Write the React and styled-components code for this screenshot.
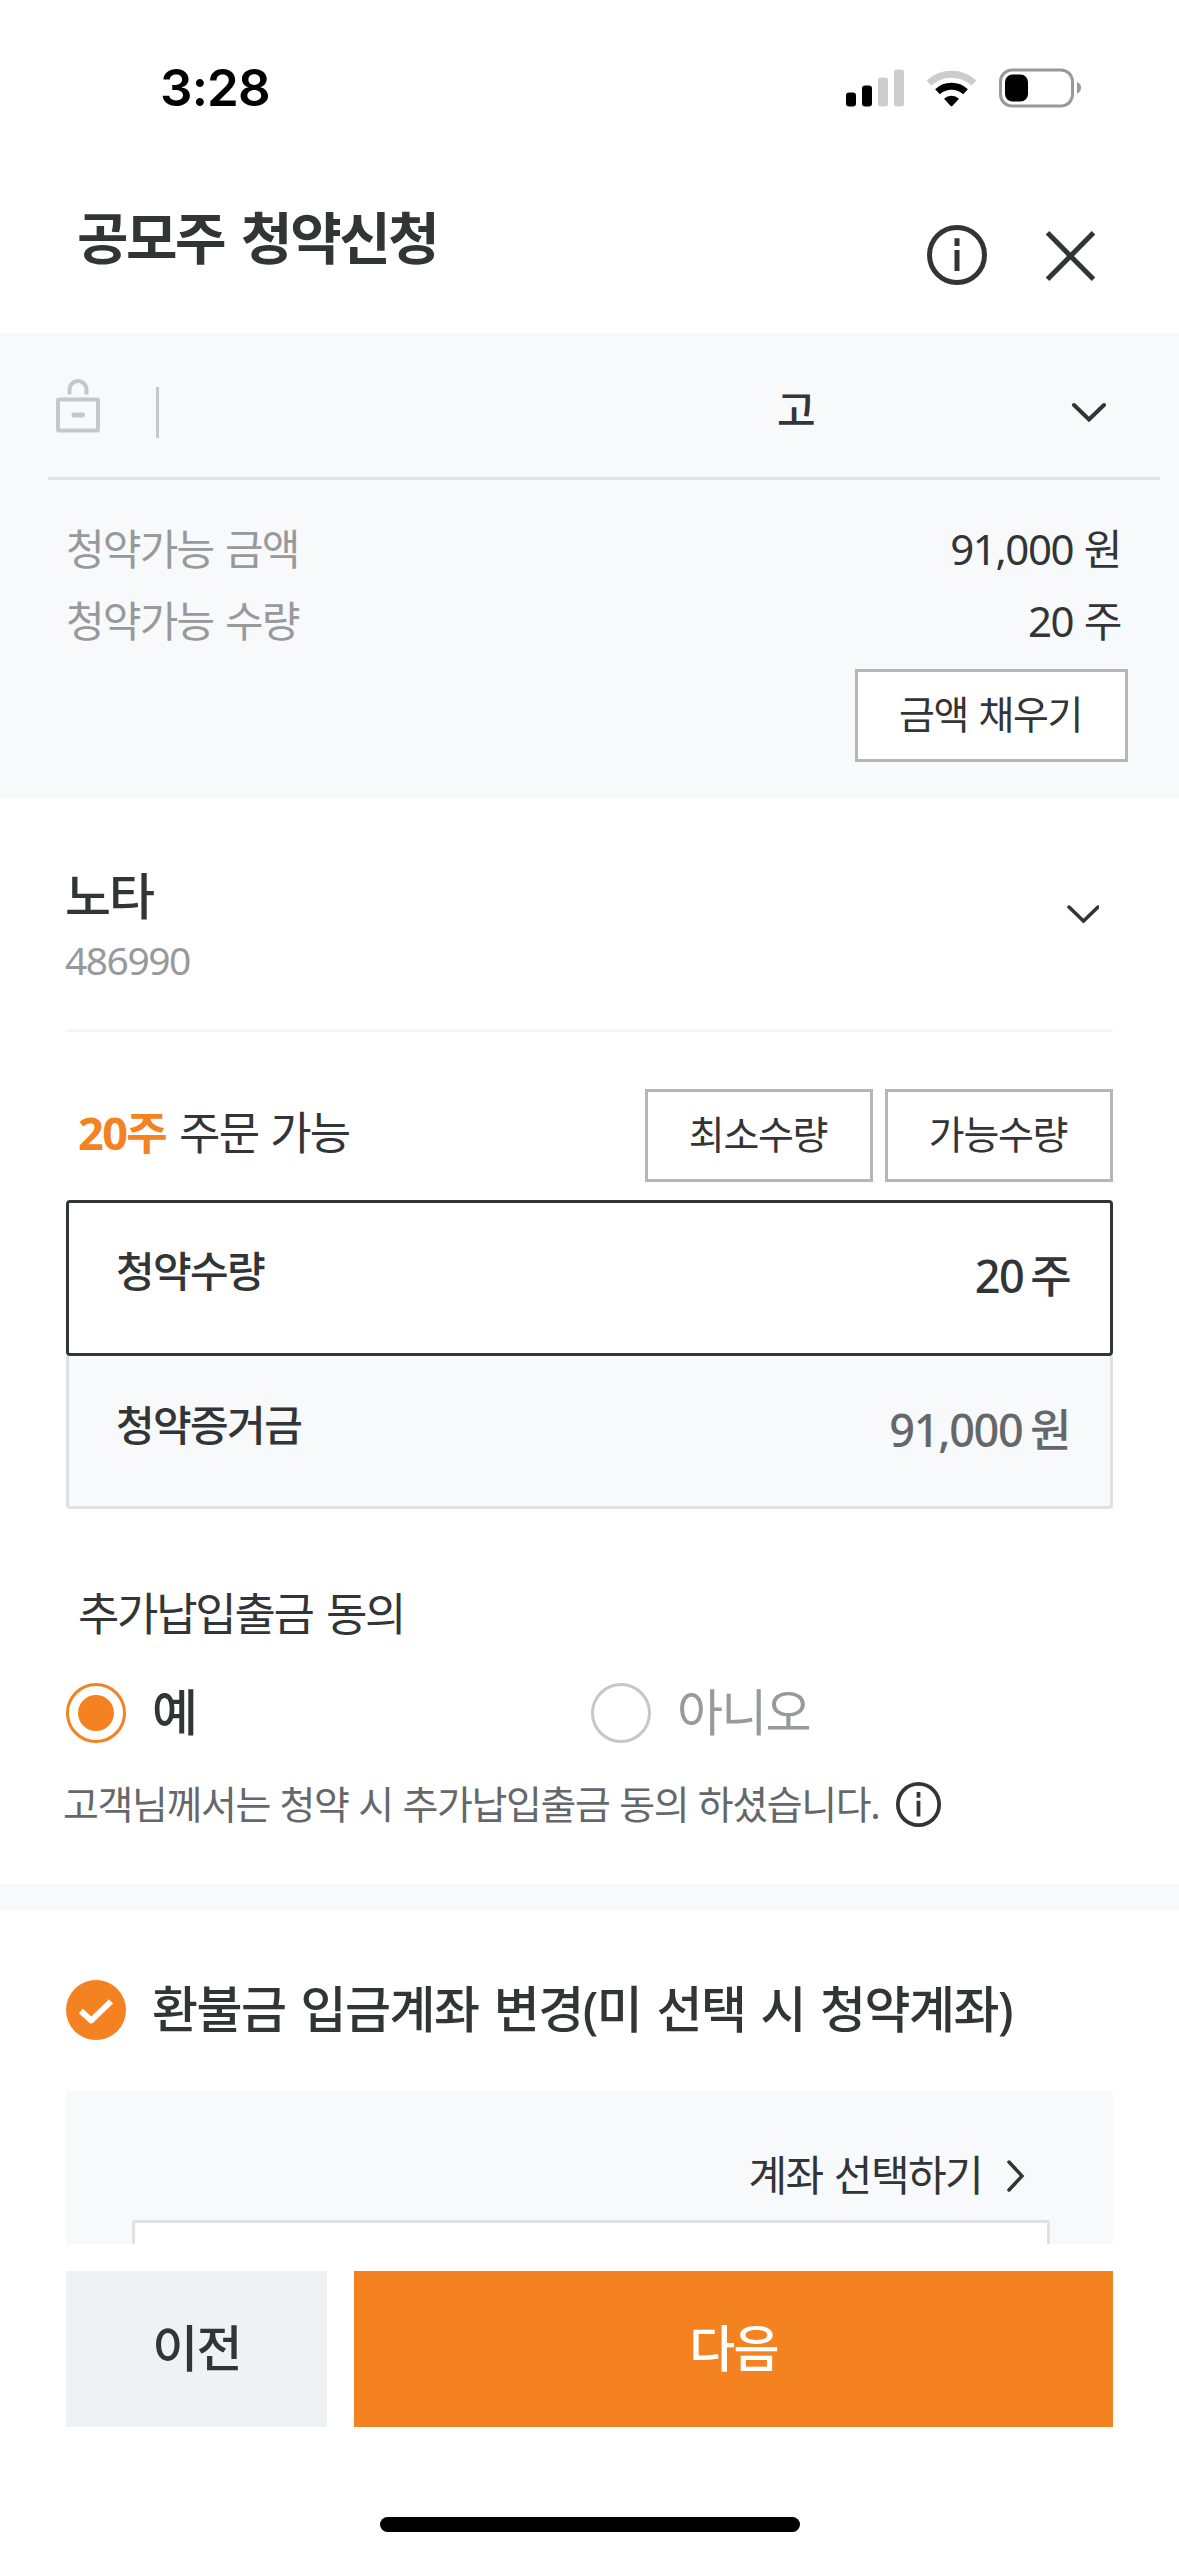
import React from "react";
import styled, { createGlobalStyle } from "styled-components";

const color = {
  ink: "#333435",
  sub: "#666769",
  mute: "#98999b",
  faint: "#c5c7ca",
  line: "#dfe1e4",
  panel: "#f8f9fb",
  orange: "#f58220",
};

const GlobalStyle = createGlobalStyle`
  * { box-sizing: border-box; }
  body { margin: 0; background: #fff; }
  button { font: inherit; margin: 0; padding: 0; background: none; border: 0; border-radius: 0; color: inherit; letter-spacing: inherit; }
`;

const Screen = styled.div`
  width: 1179px;
  height: 2556px;
  overflow: hidden;
  display: flex;
  flex-direction: column;
  background: #fff;
  color: ${color.ink};
  font-family: "Noto Sans", "Noto Sans CJK KR", sans-serif;
  font-size: 42px;
  line-height: 60px;
`;

const Text = styled.span`
  display: block;
  white-space: nowrap;
  padding-bottom: 2px;
  font-size: ${(p) => p.$size || 42}px;
  font-weight: ${(p) => p.$weight || 400};
  color: ${(p) => p.$color || color.ink};
  letter-spacing: ${(p) => p.$track ?? -1.6}px;
  word-spacing: ${(p) => p.$word || 0}px;
`;

const StatusBar = styled.div`
  height: 176px;
  padding: 0 98px 0 160px;
  display: flex;
  align-items: center;
  justify-content: space-between;
`;

const Clock = styled.span`
  font-family: Inter, sans-serif;
  font-weight: 600;
  font-size: 51px;
  letter-spacing: -0.8px;
  color: #000;
`;

const Header = styled.header`
  height: 157px;
  padding: 31px 82px 0 77px;
  display: flex;
  align-items: flex-start;
  justify-content: space-between;
`;

const Title = styled(Text)`
  margin: 0;
`;

const HeaderActions = styled.div`
  display: flex;
  align-items: center;
  gap: 57px;
  padding-top: 18px;
`;

const AccountPanel = styled.section`
  height: 465px;
  background: ${color.panel};
  display: flex;
  flex-direction: column;
`;

const AccountSelect = styled.div`
  height: 147px;
  margin: 0 19px 0 48px;
  padding: 15px 53px 0 7px;
  border-bottom: 3px solid ${color.line};
  display: flex;
  align-items: center;
`;

const Separator = styled.span`
  width: 3px;
  height: 51px;
  margin-left: 55px;
  background: ${color.faint};
`;

const AccountName = styled.div`
  flex: 1;
  padding-left: 618px;
  margin-top: -3px;
`;

const AccountToggle = styled.div`
  display: flex;
  padding-bottom: 2px;
`;

const AmountList = styled.div`
  padding: 34px 58px 0 66px;
`;

const AmountRow = styled.div`
  height: 72px;
  display: flex;
  align-items: center;
  justify-content: space-between;
`;

const OutlineButton = styled.button`
  width: ${(p) => p.$width}px;
  height: 93px;
  padding: 0 2px 1px 0;
  border: 3px solid #b3b7ba;
  background: #fff;
  display: flex;
  align-items: center;
  justify-content: center;
`;

const FillRow = styled.div`
  display: flex;
  justify-content: flex-end;
  padding: 11px 51px 0 0;
`;

const Stock = styled.section`
  height: 234px;
  margin: 0 66px;
  padding: 68px 14px 0 0;
  border-bottom: 3px solid #f5f7fa;
  display: flex;
  align-items: flex-start;
  justify-content: space-between;
`;

const StockInfo = styled.div`
  display: flex;
  flex-direction: column;
  gap: 2px;
  margin-left: -1px;
`;

const StockToggle = styled.div`
  padding-top: 38px;
  display: flex;
`;

const OrderBar = styled.div`
  margin: 57px 66px 18px;
  height: 93px;
  display: flex;
  align-items: center;
  gap: 12px;
`;

const Available = styled.div`
  flex: 1;
  display: flex;
  gap: 13px;
  padding: 0 0 4px 12px;
`;

const Field = styled.div`
  height: ${(p) => (p.$active ? 156 : 153)}px;
  margin: 0 66px;
  padding: ${(p) => (p.$active ? 38 : 39)}px 40px 0 47px;
  border: 3px solid ${(p) => (p.$active ? color.ink : color.line)};
  border-radius: ${(p) => (p.$active ? "4px" : "0 0 4px 4px")};
  ${(p) => !p.$active && "border-top: 0;"}
  background: ${(p) => (p.$active ? "#fff" : color.panel)};
  display: flex;
  justify-content: space-between;
`;

const FieldValue = styled.div`
  padding-top: 5px;
`;

const Consent = styled.section`
  height: 375px;
  padding: 75px 66px 0;
`;

const ConsentTitle = styled.div`
  height: 60px;
  padding-left: 12px;
`;

const RadioGroup = styled.div`
  display: grid;
  grid-template-columns: 525px 1fr;
  margin-top: 39px;
`;

const RadioOption = styled.label`
  height: 60px;
  display: flex;
  align-items: center;
  gap: 26px;
`;

const RadioDot = styled.span`
  width: 60px;
  height: 60px;
  border-radius: 50%;
  border: 3px solid ${(p) => (p.$checked ? color.orange : color.faint)};
  display: flex;
  align-items: center;
  justify-content: center;
  &::after {
    content: "";
    width: 36px;
    height: 36px;
    border-radius: 50%;
    background: ${(p) => (p.$checked ? color.orange : "transparent")};
  }
`;

const Note = styled.div`
  height: 45px;
  margin: 39px 0 0 -3px;
  display: flex;
  align-items: center;
  gap: 17px;
`;

const Band = styled.div`
  height: 27px;
  flex-shrink: 0;
  background: ${color.panel};
`;

const Refund = styled.section`
  height: 333px;
  padding: 69px 66px 0;
`;

const CheckRow = styled.label`
  height: 60px;
  display: flex;
  align-items: center;
  gap: 26px;
`;

const RefundPanel = styled.div`
  height: 153px;
  margin-top: 51px;
  padding: 55px 63px 0 66px;
  overflow: hidden;
  background: ${color.panel};
`;

const PickAccount = styled.div`
  height: 60px;
  display: flex;
  align-items: center;
  justify-content: flex-end;
  gap: 24px;
  padding-right: 25px;
`;

const AccountBox = styled.div`
  height: 100px;
  margin-top: 14px;
  border: 3px solid ${color.line};
  border-radius: 3px;
  background: #fff;
`;

const Footer = styled.footer`
  display: flex;
  gap: 27px;
  padding: 27px 66px 0;
`;

const FooterButton = styled.button`
  height: 156px;
  ${(p) => (p.$primary ? "flex: 1;" : "width: 261px;")}
  background: ${(p) => (p.$primary ? color.orange : "#eff1f5")};
  display: flex;
  align-items: center;
  justify-content: center;
`;

const HomeBar = styled.div`
  width: 420px;
  height: 15px;
  margin: 90px auto 0;
  border-radius: 8px;
  background: #000;
`;

const StatusIcons = () => (
  <svg width="236" height="40" viewBox="845 67.5 236 40" style={{ display: "block" }}>
    <rect x="846" y="92" width="10" height="14" rx="3" fill="#000" />
    <rect x="862" y="85" width="10" height="21" rx="3" fill="#000" />
    <rect x="878" y="77" width="10" height="29" rx="3" fill="#ccc" />
    <rect x="894" y="69" width="10" height="37" rx="3" fill="#ccc" />
    <path d="M929 82.5 A33 33 0 0 1 974 82.5" fill="none" stroke="#ccc" strokeWidth="7" />
    <path d="M937.5 91.3 A20.5 20.5 0 0 1 965.5 91.3" fill="none" stroke="#000" strokeWidth="7" />
    <path d="M944 98.3 A11 11 0 0 1 959 98.3 L952.3 105.4 Q951.5 106.2 950.7 105.4 Z" fill="#000" />
    <rect x="1000.5" y="69.5" width="72" height="36" rx="11.5" fill="none" stroke="#999" strokeWidth="3" />
    <rect x="1005" y="74" width="23" height="27" rx="7.5" fill="#000" />
    <path d="M1077 81.5 Q1081 83 1081 87.2 Q1081 91.5 1077 93 Z" fill="#999" />
  </svg>
);

const InfoIcon = ({ size, stroke }) => (
  <svg width={size} height={size} viewBox="0 0 60 60" fill="none" stroke={color.ink} strokeWidth={stroke}>
    <circle cx="30" cy="30" r={30 - stroke / 2} />
    <path d="M30 13.3V21M30 25V46" />
  </svg>
);

const CloseIcon = () => (
  <svg width="53" height="53" viewBox="0 0 53 53" fill="none" stroke={color.ink} strokeWidth="5">
    <path d="M3.5 3.8 49.5 50.3M49.5 3.8 3.5 50.3" />
  </svg>
);

const Chevron = ({ width, height, stroke, d }) => (
  <svg width={width} height={height} viewBox={`0 0 ${width} ${height}`} fill="none" stroke={color.ink} strokeWidth={stroke} strokeLinecap="round">
    <path d={d} />
  </svg>
);

const LockIcon = () => (
  <svg width="46" height="68" viewBox="0 0 46 68" fill="none" stroke={color.faint} strokeWidth="4">
    <path d="M14.5 16.5V11.500a8.500 8.500 0 0 1 17 0V16.5" transform="translate(0 -1)" />
    <rect x="3" y="20.5" width="40" height="31" rx="1" />
    <path d="M19 36H27.5" strokeWidth="5" strokeLinecap="round" />
  </svg>
);

const CheckIcon = () => (
  <svg width="60" height="60" viewBox="0 0 60 60">
    <circle cx="30" cy="30" r="30" fill={color.orange} />
    <path d="M14.8 31 25.3 40.500 45 21.300" fill="none" stroke="#fff" strokeWidth="5.8" strokeLinejoin="round" />
  </svg>
);

export default function App() {
  return (
    <>
      <GlobalStyle />
      <Screen>
        <StatusBar>
          <Clock>3:28</Clock>
          <StatusIcons />
        </StatusBar>
        <Header>
          <Title as="h1" $size={56} $weight={700} $track={-2.5} $word={5}>공모주 청약신청</Title>
          <HeaderActions>
            <InfoIcon size={60} stroke={5} />
            <CloseIcon />
          </HeaderActions>
        </Header>

        <AccountPanel>
          <AccountSelect>
            <LockIcon />
            <Separator />
            <AccountName>
              <Text $weight={500}>고</Text>
            </AccountName>
            <AccountToggle>
              <Chevron width={36} height={20} stroke={4} d="M3 3 18 17.5 33 3" />
            </AccountToggle>
          </AccountSelect>
          <AmountList>
            <AmountRow>
              <Text $color={color.mute} $track={-1.8} $word={2.5}>청약가능 금액</Text>
              <Text $track={-1.4} $word={1}>91,000 원</Text>
            </AmountRow>
            <AmountRow>
              <Text $color={color.mute} $track={-1.8} $word={2.5}>청약가능 수량</Text>
              <Text $track={-1.4} $word={1}>20 주</Text>
            </AmountRow>
          </AmountList>
          <FillRow>
            <OutlineButton $width={273}>
              <Text $size={39} $track={-1.4} $word={2}>금액 채우기</Text>
            </OutlineButton>
          </FillRow>
        </AccountPanel>

        <Stock>
          <StockInfo>
            <Text $size={50} $weight={500} $track={-2}>노타</Text>
            <Text $size={39} $color={color.mute} $track={-1.5}>486990</Text>
          </StockInfo>
          <StockToggle>
            <Chevron width={32} height={20} stroke={3.5} d="M2 3 16.5 17 31 3" />
          </StockToggle>
        </Stock>

        <OrderBar>
          <Available>
            <Text $size={45} $weight={700} $color={color.orange} $track={-1.6}>20주</Text>
            <Text $size={45} $track={-1.8} $word={2}>주문 가능</Text>
          </Available>
          <OutlineButton $width={228}>
            <Text $size={39} $track={-1.3}>최소수량</Text>
          </OutlineButton>
          <OutlineButton $width={228}>
            <Text $size={39} $track={-1.3}>가능수량</Text>
          </OutlineButton>
        </OrderBar>

        <Field $active>
          <Text $weight={500}>청약수량</Text>
          <FieldValue>
            <Text $size={45} $weight={500} $word={-3}>20 주</Text>
          </FieldValue>
        </Field>
        <Field>
          <Text $weight={500}>청약증거금</Text>
          <FieldValue>
            <Text $size={45} $weight={500} $color={color.sub} $track={-1.3} $word={-3}>91,000 원</Text>
          </FieldValue>
        </Field>

        <Consent>
          <ConsentTitle>
            <Text $size={45} $track={-2.3} $word={4}>추가납입출금 동의</Text>
          </ConsentTitle>
          <RadioGroup>
            <RadioOption>
              <RadioDot $checked />
              <Text $size={50} $weight={500} $track={-2}>예</Text>
            </RadioOption>
            <RadioOption>
              <RadioDot />
              <Text $size={50} $color={color.mute} $track={-1.7}>아니오</Text>
            </RadioOption>
          </RadioGroup>
          <Note>
            <Text $size={39} $color={color.sub} $track={-1.4} $word={1}>고객님께서는 청약 시 추가납입출금 동의 하셨습니다.</Text>
            <InfoIcon size={45} stroke={5} />
          </Note>
        </Consent>

        <Band />

        <Refund>
          <CheckRow>
            <CheckIcon />
            <Text $size={50} $weight={500} $track={-1.5} $word={3.6}>환불금 입금계좌 변경(미 선택 시 청약계좌)</Text>
          </CheckRow>
          <RefundPanel>
            <PickAccount>
              <Text $word={2}>계좌 선택하기</Text>
              <Chevron width={19} height={34} stroke={3.5} d="M3 3 16 17 3 31" />
            </PickAccount>
            <AccountBox />
          </RefundPanel>
        </Refund>

        <Footer>
          <FooterButton>
            <Text $size={50} $weight={500} $track={-1.7}>이전</Text>
          </FooterButton>
          <FooterButton $primary>
            <Text $size={50} $weight={500} $color="#fff" $track={-1.7}>다음</Text>
          </FooterButton>
        </Footer>
        <HomeBar />
      </Screen>
    </>
  );
}
